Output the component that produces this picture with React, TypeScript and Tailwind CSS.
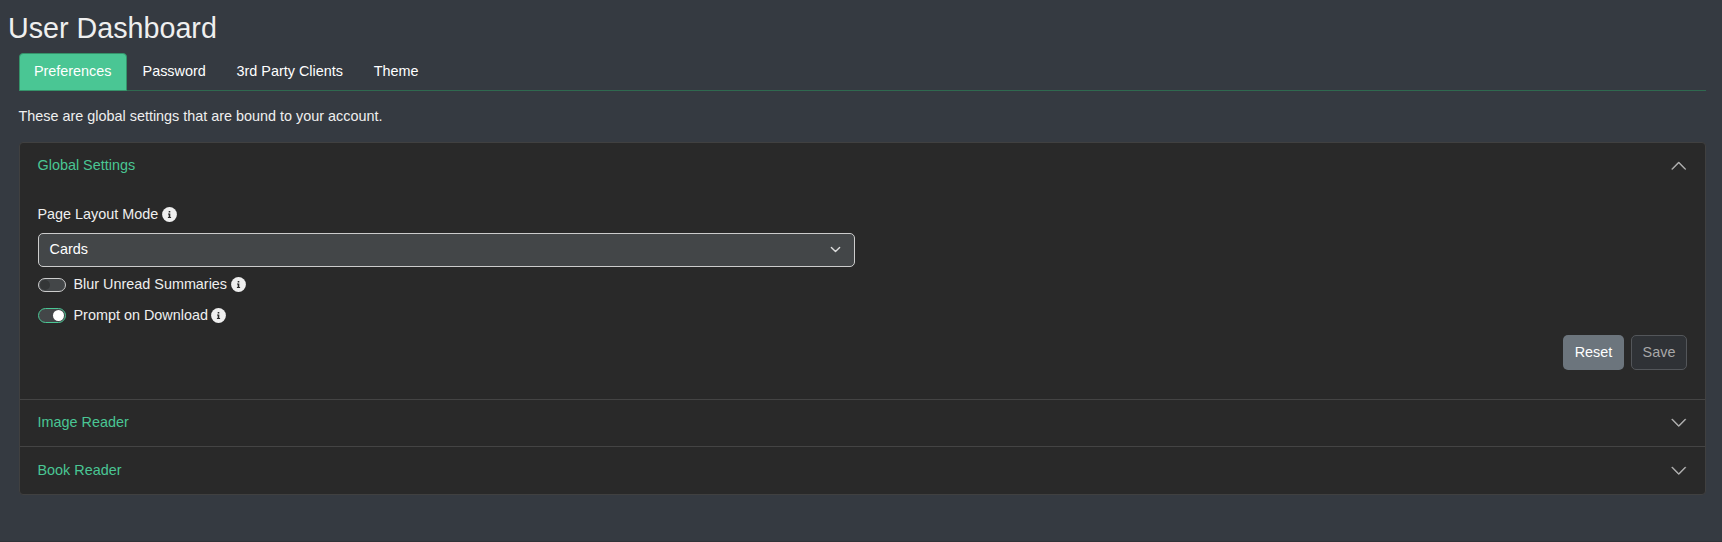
import React from "react";

const tabs = ["Preferences", "Password", "3rd Party Clients", "Theme"];

function Chevron({ up = false }: { up?: boolean }) {
  return (
    <svg viewBox="0 0 16 16" className={up ? "size-[17.5px] rotate-180" : "size-[17.5px]"} fill="#b8b8b8" stroke="#b8b8b8" strokeWidth="0.3">
      <path fillRule="evenodd" d="M1.646 4.646a.5.5 0 0 1 .708 0L8 10.293l5.646-5.647a.5.5 0 0 1 .708.708l-6 6a.5.5 0 0 1-.708 0l-6-6a.5.5 0 0 1 0-.708z" />
    </svg>
  );
}

function InfoIcon() {
  return (
    <svg viewBox="0 0 15 15" className="-mt-[2px] ml-[4px] size-[15px]">
      <circle cx="7.5" cy="7.5" r="7.4" fill="#efefef" />
      <path d="M6.7 4h1.6v1.4H6.7zM6 6.6h2.3v3.4h.8v1H5.9v-1h.8V7.6H6z" fill="#292929" />
    </svg>
  );
}

function Toggle({ label, on = false }: { label: string; on?: boolean }) {
  return (
    <div className="flex h-[22px] items-center">
      <span
        className={
          on
            ? "-mt-px mr-[7.5px] flex h-[15px] w-[28px] items-center justify-end rounded-full border border-[#4ac694] bg-[#434648] pr-px"
            : "mr-[7.5px] flex h-[14px] w-[28px] items-center justify-start rounded-full border border-[#cccccc] bg-[#434648] pl-px"
        }
      >
        <span className={on ? "size-[11px] rounded-full bg-white" : "size-[10px] rounded-full bg-[#343637]"} />
      </span>
      <span className="-mr-[0.5px]">{label}</span>
      <InfoIcon />
    </div>
  );
}

function Header({ title, open = false }: { title: string; open?: boolean }) {
  return (
    <div className="flex h-[46px] items-center justify-between pr-[18px] pl-[17.5px] text-[#4ac694]">
      <span>{title}</span>
      <span>
        <Chevron up={open} />
      </span>
    </div>
  );
}

export default function App() {
  return (
    <div className="flex h-[542px] flex-col overflow-hidden bg-[#353a41] font-['Liberation_Sans',Arial,sans-serif] text-[14.4px] leading-[21.6px] text-[#efefef]">
      <h2 className="h-[53px] pt-[11px] pl-[8px] text-[28.7px] leading-[34.6px]">User Dashboard</h2>
      <div className="mr-[16px] ml-[19px]">
        <nav className="flex h-[38px] border-b border-[#2f694f] text-white">
          {tabs.map((tab, i) => (
            <span
              key={tab}
              className={
                i === 0
                  ? "h-[38px] rounded-t-[4px] border border-[#35936a] bg-[#4ac694] pt-[7px] pr-[14.9px] pl-[13.9px]"
                  : "h-[38px] border border-transparent pt-[7px] pr-[14.6px] pl-[14.2px]"
              }
            >
              {tab}
            </span>
          ))}
        </nav>
        <p className="-ml-[0.5px] h-[51px] pt-[15px]">These are global settings that are bound to your account.</p>
        <div className="h-[353px] overflow-hidden rounded-[4px] border border-[#404040] bg-[#292929]">
          <Header title="Global Settings" open />
          <div className="h-[210px] px-[18px] pt-[15px]">
            <div className="-ml-[0.5px] flex h-[22px] items-center">
              Page Layout Mode
              <InfoIcon />
            </div>
            <div className="mt-[7px] flex h-[34px] w-[817px] items-center justify-between rounded-[5px] border border-[#cccccc] bg-[#434648] pr-[13px] pl-[10.5px] text-white">
              <span className="-mt-px">Cards</span>
              <svg viewBox="0 0 16 16" className="-mt-px size-[11px]" fill="none" stroke="#dddddd" strokeWidth="2" strokeLinecap="round" strokeLinejoin="round">
                <path d="m2 5 6 6 6-6" />
              </svg>
            </div>
            <div className="mt-[7px]">
              <Toggle label="Blur Unread Summaries" />
            </div>
            <div className="mt-[9px]">
              <Toggle label="Prompt on Download" on />
            </div>
            <div className="mt-[8px] flex justify-end gap-[7px]">
              <button className="h-[35px] w-[61px] rounded-[5px] bg-[#6c757d] text-white">Reset</button>
              <button className="h-[35px] w-[56px] rounded-[5px] border border-[#53565a] bg-[#2f3236] text-[#a8a8a8]">Save</button>
            </div>
          </div>
          <div className="border-t border-[#444444]">
            <Header title="Image Reader" />
          </div>
          <div className="border-t border-[#444444] pt-px">
            <Header title="Book Reader" />
          </div>
        </div>
      </div>
      <div className="mt-auto h-px bg-[#303338]" />
    </div>
  );
}
